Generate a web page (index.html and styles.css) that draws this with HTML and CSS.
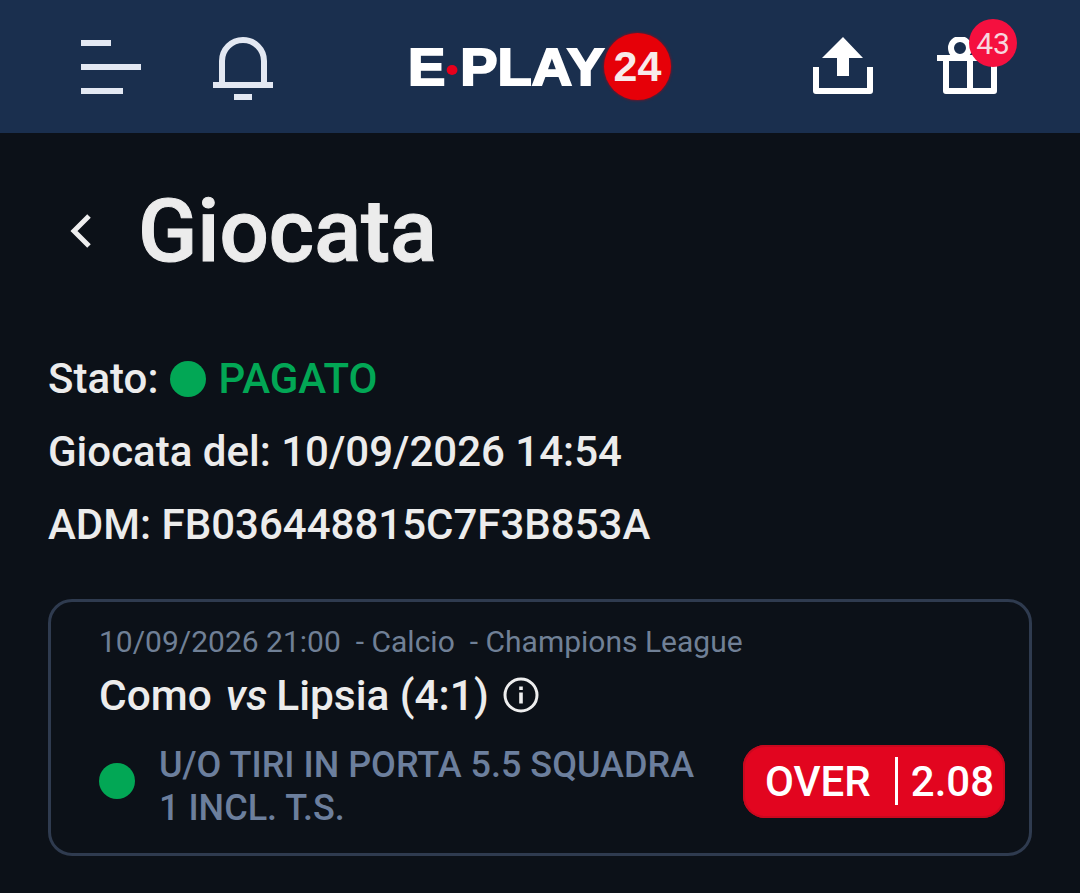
FILE: index.html
```html
<!DOCTYPE html>
<html lang="it">
<head>
<meta charset="utf-8">
<title>Giocata</title>
<link rel="stylesheet" href="styles.css">
</head>
<body>
<header class="topbar">
  <svg class="icon menu-icon" viewBox="0 0 60 54" width="60" height="54"><path d="M0 3h30M0 27h60M0 51h42" stroke="#e3e8f2" stroke-width="6" fill="none"/></svg>
  <svg class="icon bell-icon" viewBox="0 0 60 63" width="60" height="63"><path d="M9 47V24a21 21 0 0 1 42 0v23" stroke="#e3e8f2" stroke-width="6" fill="none"/><path d="M0 45h60v6H0zM21 57h18v6H21z" fill="#e3e8f2"/></svg>
  <div class="logo">
    <span class="logo-word"><span>E</span><i class="logo-dot"></i><span>PLAY</span></span>
    <span class="logo-ball">24</span>
  </div>
  <svg class="icon upload-icon" viewBox="0 0 60 57" width="60" height="57"><path d="M30 0L50 21H36V39H24V21H9Z" fill="#fff"/><path d="M3 30V54H57V30" stroke="#fff" stroke-width="6" stroke-linejoin="round" fill="none"/></svg>
  <div class="gift">
    <svg class="icon" viewBox="0 0 60 57" width="60" height="57"><circle cx="23" cy="11" r="9" stroke="#fff" stroke-width="6" fill="none"/><path d="M0 18h60v6H0z" fill="#fff"/><path d="M9 22V54H57V22M33 22V54" stroke="#fff" stroke-width="6" stroke-linejoin="round" fill="none"/></svg>
    <span class="badge">43</span>
  </div>
</header>
<main class="page">
  <div class="title-row">
    <svg class="back" viewBox="0 0 24 36" width="24" height="36"><path d="M20 3L5 18l15 15" stroke="#eee" stroke-width="5" fill="none"/></svg>
    <h1>Giocata</h1>
  </div>
  <div class="info">
    <p><span>Stato:</span><i class="dot"></i><span class="paid">PAGATO</span></p>
    <p>Giocata del: 10/09/2026 14:54</p>
    <p>ADM: FB036448815C7F3B853A</p>
  </div>
  <section class="card">
    <div class="meta"><span>10/09/2026 21:00</span><span>- Calcio</span><span>- Champions League</span></div>
    <div class="match">
      <span>Como</span><em>vs</em><span>Lipsia (4:1)</span>
      <svg class="info-icon" viewBox="0 0 36 36" width="36" height="36"><circle cx="18" cy="18" r="16" stroke="#eee" stroke-width="3" fill="none"/><path d="M16.2 9.5h3.6v3.6h-3.6zM16.2 15.5h3.6v11h-3.6z" fill="#eee"/></svg>
    </div>
    <div class="bet">
      <i class="dot"></i>
      <div class="market">U/O TIRI IN PORTA 5.5 SQUADRA 1 INCL. T.S.</div>
      <div class="odds"><span>OVER</span><i class="sep"></i><span>2.08</span></div>
    </div>
  </section>
</main>
</body>
</html>
```
FILE: styles.css
```css
* { box-sizing: border-box; }
html, body { margin: 0; padding: 0; }
body {
  width: 1080px;
  height: 893px;
  overflow: hidden;
  background: #0c1118;
  color: #ececec;
  font-family: Roboto, "Liberation Sans", sans-serif;
}
.topbar {
  height: 133px;
  background: #1a2f4e;
  display: flex;
  align-items: flex-start;
  padding-left: 81px;
}
.icon { display: block; flex: none; }
.menu-icon { margin-top: 40px; }
.bell-icon { margin-left: 72px; margin-top: 37px; }
.logo {
  margin-left: 135px;
  margin-top: 33px;
  width: 263px;
  height: 67px;
  display: flex;
  align-items: center;
}
.logo-word {
  display: flex;
  align-items: center;
  font-family: "Liberation Sans", sans-serif;
  font-weight: 700;
  font-size: 52px;
  line-height: 1;
  color: #fff;
  -webkit-text-stroke: 2px #fff;
  width: 198px;
  margin-right: -2px;
  flex: none;
  transform: scaleX(1.075);
  transform-origin: left center;
}
.logo-dot {
  width: 10px;
  height: 10px;
  border-radius: 50%;
  background: #e8001c;
  margin: 6px 3px 0 1px;
  flex: none;
}
.logo-ball {
  width: 67px;
  height: 67px;
  border-radius: 50%;
  background: #e60008;
  box-shadow: 0 0 3px #b00010;
  color: #f8eaea;
  font-family: "Liberation Sans", sans-serif;
  font-weight: 700;
  font-size: 43px;
  display: flex;
  align-items: center;
  justify-content: center;
  flex: none;
  position: relative;
}
.upload-icon { margin-left: 142px; margin-top: 37px; }
.gift { position: relative; margin-left: 64px; margin-top: 37px; }
.badge {
  position: absolute;
  left: 32px;
  top: -18px;
  width: 48px;
  height: 48px;
  border-radius: 50%;
  background: #f5103f;
  color: #f7d6de;
  font-size: 30px;
  display: flex;
  align-items: center;
  justify-content: center;
}
.page { padding: 0 48px; }
.title-row {
  height: 198px;
  display: flex;
  align-items: center;
  padding-left: 21px;
  padding-bottom: 2px;
}
.back { flex: none; }
h1 {
  margin: 0 0 0 45px;
  font-size: 87px;
  font-weight: 500;
  line-height: 1;
  color: #ececec;
  -webkit-text-stroke: 1px #ececec;
}
.info { margin-top: 11px; }
.info p {
  margin: 0;
  height: 73px;
  display: flex;
  align-items: center;
  gap: 12px;
  font-size: 42px;
  font-weight: 500;
  white-space: pre;
}
.dot {
  display: block;
  flex: none;
  width: 36px;
  height: 36px;
  border-radius: 50%;
  background: #02a755;
}
.paid { color: #02a755; }
.card {
  margin-top: 38px;
  width: 984px;
  height: 257px;
  border: 3px solid #2f3b4f;
  border-radius: 24px;
  padding: 20px 24px 0 48px;
}
.meta {
  display: flex;
  gap: 15px;
  font-size: 30px;
  line-height: 40px;
  color: #708096;
}
.match {
  display: flex;
  align-items: center;
  margin-top: 11px;
  height: 44px;
  font-size: 42.4px;
  font-weight: 500;
  color: #ececec;
}
.match em { margin: 0 9px 0 14px; font-weight: 500; }
.info-icon { margin-left: 14px; }
.bet {
  display: flex;
  align-items: center;
  margin-top: 15px;
}
.market {
  width: 550px;
  margin-left: 24px;
  margin-right: 34px;
  padding-top: 12px;
  font-size: 36px;
  font-weight: 500;
  line-height: 43px;
  color: #6c7f9d;
}
.odds {
  width: 262px;
  height: 73px;
  padding-left: 22px;
  border-radius: 22px;
  background: #e2051f;
  box-shadow: inset 0 0 0 2px #c9081e;
  color: #fff;
  font-size: 42px;
  font-weight: 500;
  display: flex;
  align-items: center;
  flex: none;
}
.sep {
  display: block;
  width: 3px;
  height: 48px;
  background: #fff;
  margin: 0 13px 0 24px;
}
```
